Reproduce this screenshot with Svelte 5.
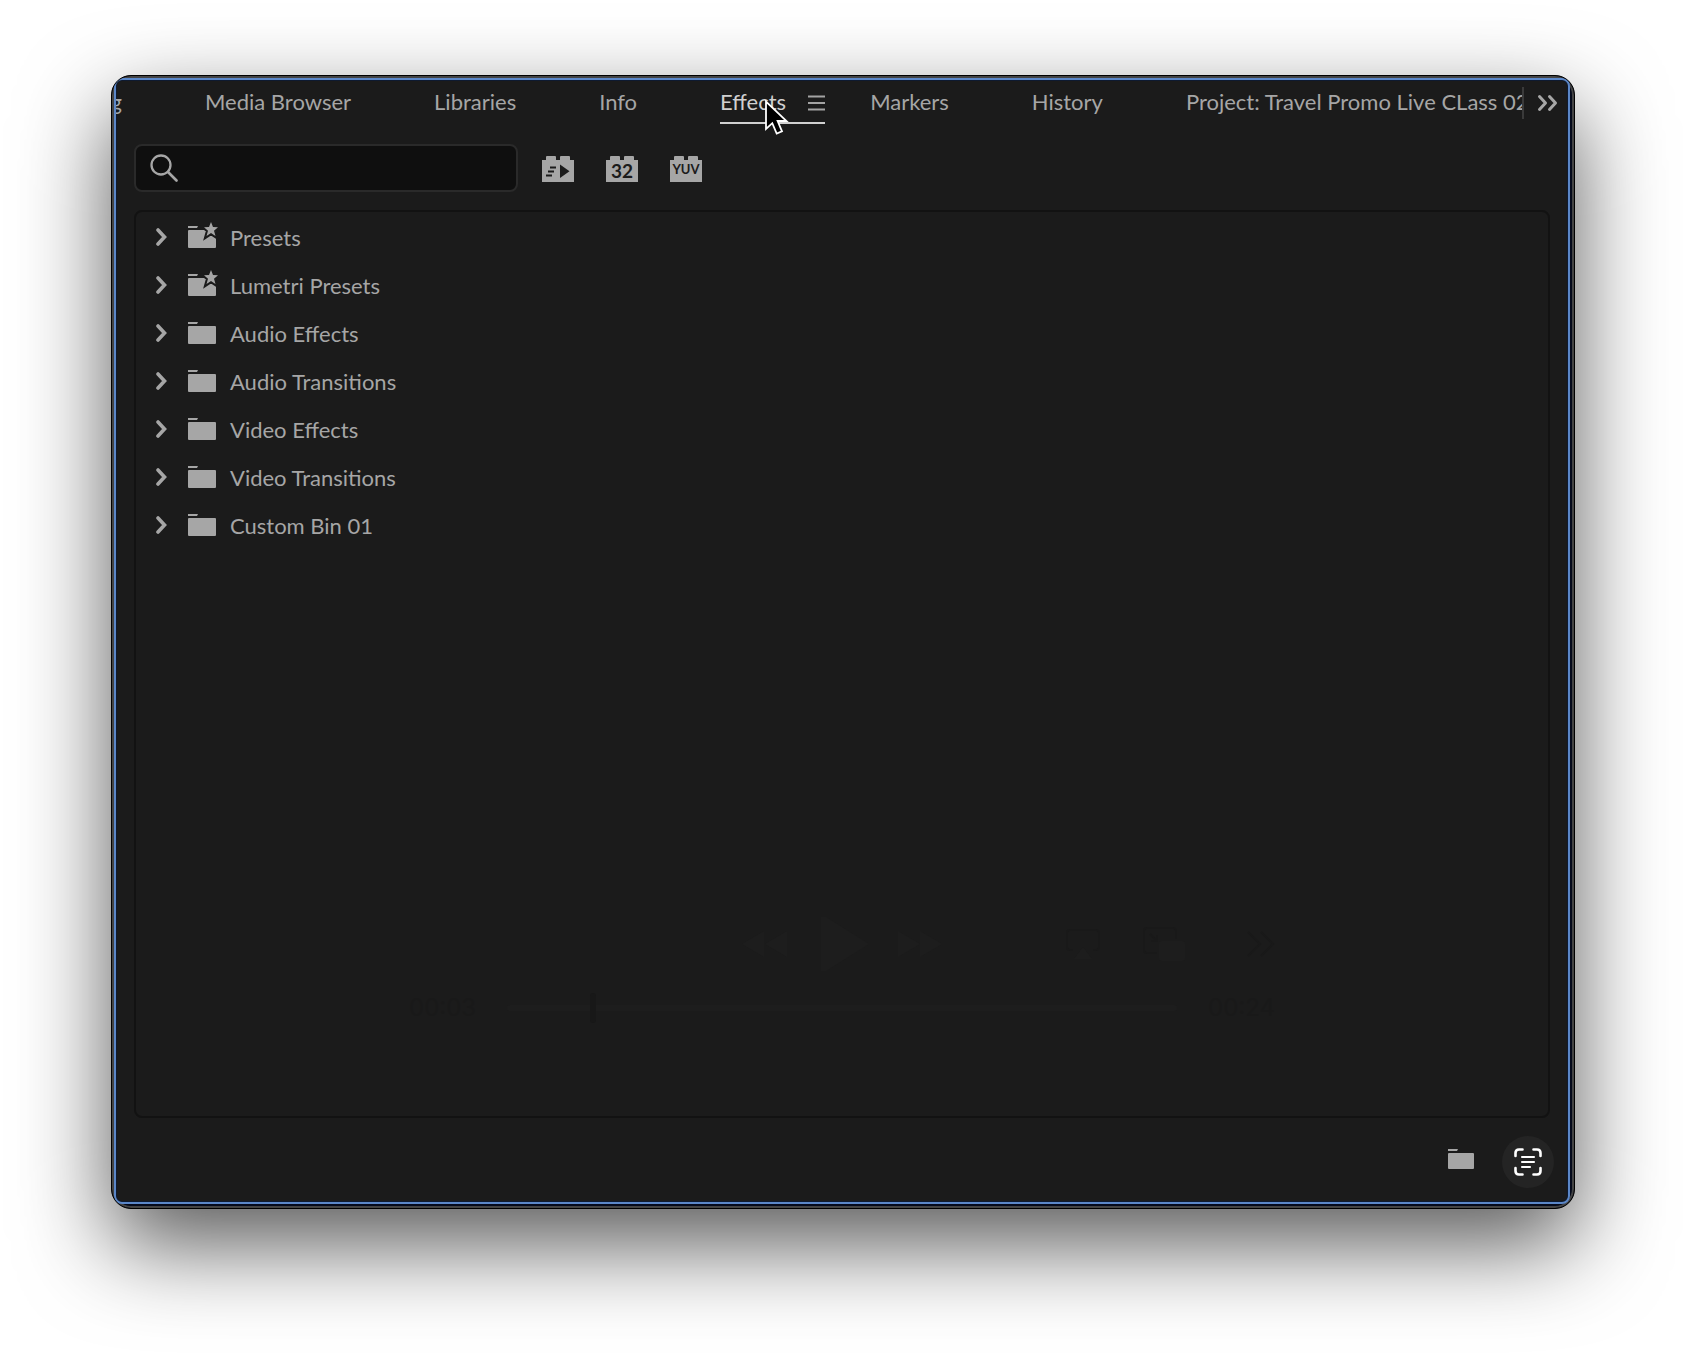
<script lang="ts">
	const bins = [
		{ name: 'Presets', preset: true },
		{ name: 'Lumetri Presets', preset: true },
		{ name: 'Audio Effects', preset: false },
		{ name: 'Audio Transitions', preset: false },
		{ name: 'Video Effects', preset: false },
		{ name: 'Video Transitions', preset: false },
		{ name: 'Custom Bin 01', preset: false }
	];

	const tabsBefore = ['Media Browser', 'Libraries', 'Info'];
	const tabsAfter = ['Markers', 'History', 'Project: Travel Promo Live CLass 02'];

	let query = $state('');
	let position = $state(3);
</script>

<main class="stage">
	<div class="window">
		<section class="panel">
			<header class="tabbar">
				<nav class="tabs">
					<button class="tab cut">g</button>
					{#each tabsBefore as tab}
						<button class="tab">{tab}</button>
					{/each}
					<div class="active">
						<button class="tab current">Effects</button>
						<button class="menu" aria-label="Panel menu">
							<svg width="17" height="16" viewBox="0 0 17 16">
								<path d="M0 1.5h17M0 8h17M0 14.5h17" stroke="#a3a3a3" stroke-width="1.8" />
							</svg>
						</button>
						<svg class="cursor" width="26" height="38" viewBox="0 0 26 38">
							<path
								d="M2 2.500V30L8.300 24.200L12.700 34.500L18 32.300L13.600 22H22.500Z"
								fill="#000"
								stroke="#fff"
								stroke-width="1.8"
							/>
						</svg>
					</div>
					{#each tabsAfter as tab}
						<button class="tab">{tab}</button>
					{/each}
				</nav>
				<button class="overflow" aria-label="More panels">
					<svg width="22" height="18" viewBox="0 0 22 18">
						<path
							d="M2.500 2.500L8.500 9L2.500 15.500M12.500 2.500L18.500 9L12.500 15.500"
							fill="none"
							stroke="#a6a6a6"
							stroke-width="3"
							stroke-linecap="round"
							stroke-linejoin="round"
						/>
					</svg>
				</button>
			</header>

			<div class="toolbar">
				<label class="search">
					<svg width="28" height="28" viewBox="0 0 28 28">
						<circle cx="11" cy="11" r="9.500" fill="none" stroke="#a6a6a6" stroke-width="2.300" />
						<path d="M18 18L26.500 26.500" stroke="#a6a6a6" stroke-width="2.600" stroke-linecap="round" />
					</svg>
					<input type="text" bind:value={query} aria-label="Search effects" />
				</label>
				<button class="brick" aria-label="Accelerated effects">
					<svg width="32" height="26" viewBox="0 0 32 26">
						<path d="M0 4H4V1Q4 0 5 0H13Q14 0 14 1V4H18V1Q18 0 19 0H27Q28 0 28 1V4H32V26H0Z" fill="#a6a6a6" />
						<path d="M18 8.500V22L27.500 15.200Z" fill="#1b1b1b" />
						<path d="M8 11.500H14M6 15.500H12M4 19.500H10" stroke="#1b1b1b" stroke-width="1.800" />
					</svg>
				</button>
				<button class="brick" aria-label="32-bit color effects">
					<svg width="32" height="26" viewBox="0 0 32 26">
						<path d="M0 4H4V1Q4 0 5 0H13Q14 0 14 1V4H18V1Q18 0 19 0H27Q28 0 28 1V4H32V26H0Z" fill="#a6a6a6" />
						<text class="bits" x="16" y="22" text-anchor="middle">32</text>
					</svg>
				</button>
				<button class="brick" aria-label="YUV effects">
					<svg width="32" height="26" viewBox="0 0 32 26">
						<path d="M0 4H4V1Q4 0 5 0H13Q14 0 14 1V4H18V1Q18 0 19 0H27Q28 0 28 1V4H32V26H0Z" fill="#a6a6a6" />
						<text class="yuv" x="16" y="18" text-anchor="middle">YUV</text>
					</svg>
				</button>
			</div>

			<div class="list">
				<ul>
					{#each bins as bin}
						<li>
							<button class="row">
								<svg width="11" height="18" viewBox="0 0 11 18">
									<path
										d="M2 2L8.500 9L2 16"
										fill="none"
										stroke="#a6a6a6"
										stroke-width="3.600"
										stroke-linecap="round"
									/>
								</svg>
								<svg width="31" height="26" viewBox="0 0 31 26">
									<path d="M0 4H10L9 6H0Z" fill="#a6a6a6" />
									<rect y="8" width="28" height="18" rx="1" fill="#a6a6a6" />
									{#if bin.preset}
										<path
											d="M23 0L25 5L30 5.200L26 8.700L27.500 14L23 11L18.500 14L20 8.700L16 5.200L21 5Z"
											fill="#a6a6a6"
											stroke="#1b1b1b"
											stroke-width="4"
											paint-order="stroke"
										/>
									{/if}
								</svg>
								<span>{bin.name}</span>
							</button>
						</li>
					{/each}
				</ul>

				<!-- transport fading out over the panel -->
				<div class="player">
					<div class="transport">
						<div class="shuttle">
							<button aria-label="Rewind">
								<svg width="45" height="26" viewBox="0 0 45 26"><path d="M22 0V26L0 13ZM45 0V26L23 13Z" /></svg>
							</button>
							<button class="play" aria-label="Play">
								<svg width="48" height="54" viewBox="0 0 48 54"><path d="M0 0H5L48 27L5 54H0Z" /></svg>
							</button>
							<button aria-label="Fast forward">
								<svg width="45" height="26" viewBox="0 0 45 26"><path d="M0 0V26L22 13ZM22 0V26L44 13Z" /></svg>
							</button>
						</div>
						<div class="extras">
							<button aria-label="AirPlay">
								<svg width="34" height="30" viewBox="0 0 34 30">
									<path class="line" d="M7 21H4Q1 21 1 18V4Q1 1 4 1H30Q33 1 33 4V18Q33 21 30 21H27" />
									<path d="M17 18L26 30H8Z" />
								</svg>
							</button>
							<button aria-label="Picture in picture">
								<svg width="42" height="34" viewBox="0 0 42 34">
									<path class="line" d="M14 26H4Q1 26 1 23V4Q1 1 4 1H30Q33 1 33 4V12M7 7L14 14M14 8V14H8" />
									<rect x="16" y="14" width="26" height="20" rx="3" />
								</svg>
							</button>
							<button class="last" aria-label="More">
								<svg width="29" height="26" viewBox="0 0 29 26">
									<path class="line" d="M2 1L14 13L2 25M15 1L27 13L15 25" />
								</svg>
							</button>
						</div>
					</div>
					<div class="timeline">
						<span>00:03</span>
						<input type="range" min="0" max="24" bind:value={position} aria-label="Position" />
						<span>00:24</span>
					</div>
				</div>
			</div>

			<footer>
				<button class="newbin" aria-label="New custom bin">
					<svg width="26" height="20" viewBox="0 0 26 20">
						<path d="M0 0H10L9 2H0Z" fill="#a6a6a6" />
						<rect y="4" width="26" height="16" rx="1" fill="#a6a6a6" />
					</svg>
				</button>
				<button class="scan" aria-label="Live text">
					<svg width="28" height="28" viewBox="0 0 28 28" fill="none" stroke="#fff" stroke-linecap="round">
						<path
							d="M1.500 8V5Q1.500 1.500 5 1.500H8.500M19.500 1.500H23Q26.500 1.500 26.500 5V8M26.500 20V23Q26.500 26.500 23 26.500H19.500M8.500 26.500H5Q1.500 26.500 1.500 23V20"
							stroke-width="2.600"
						/>
						<path d="M8 9H20M8 14H20M8 19H16" stroke-width="2.100" />
					</svg>
				</button>
			</footer>
		</section>
	</div>
</main>

<style>
	:global(body) {
		background: #fff;
	}

	.stage {
		display: flex;
		box-sizing: border-box;
		min-height: 100vh;
		padding: 75px 111px 147px;
		overflow: hidden;
		font-family: Lato, 'Noto Sans', sans-serif;
		font-size: 22px;
		color: #a6a6a6;
	}

	button,
	input {
		margin: 0;
		padding: 0;
		border: none;
		background: none;
		color: inherit;
		font: inherit;
	}

	svg {
		display: block;
		flex: none;
	}

	.window {
		display: flex;
		flex: 1;
		min-width: 0;
		padding: 2px 4px 4px 2px;
		border: 1px solid #000;
		border-radius: 20px;
		background: #050a1c;
		box-shadow:
			inset 0 0 0 2px #444,
			0 36px 90px rgba(0, 0, 0, 0.65);
		overflow: hidden;
	}

	.panel {
		display: flex;
		flex: 1;
		flex-direction: column;
		min-width: 0;
		border: 2px solid #5b87c8;
		border-radius: 8px;
		background: #1b1b1b;
		box-shadow: inset 0 0 0 1px #0e1a30;
		overflow: hidden;
	}

	.tabbar {
		display: flex;
		align-items: center;
		height: 46px;
	}

	.tabs {
		display: flex;
		flex: 1;
		gap: 83px;
		align-items: center;
		height: 46px;
		min-width: 0;
		overflow-x: clip;
	}

	.tab {
		flex: none;
		line-height: 44px;
		padding-bottom: 2px;
		white-space: nowrap;
	}

	.cut {
		display: flex;
		justify-content: flex-end;
		width: 6px;
	}

	.active {
		position: relative;
		display: flex;
		flex: none;
		gap: 22px;
		align-items: center;
		height: 46px;
		margin-right: -38px;
	}

	.active::after {
		content: '';
		position: absolute;
		right: 0;
		bottom: 2px;
		left: 0;
		height: 2px;
		background: #d0d0d0;
	}

	.current {
		color: #d0d0d0;
	}

	.cursor {
		position: absolute;
		top: 19px;
		left: 44px;
		z-index: 1;
	}

	.overflow {
		display: flex;
		align-items: center;
		height: 32px;
		padding: 0 9px 0 13px;
		border-left: 2px solid #3a3a3a;
	}

	.toolbar {
		display: flex;
		gap: 32px;
		align-items: center;
		margin: 18px 18px 0;
	}

	.search {
		display: flex;
		gap: 12px;
		align-items: center;
		box-sizing: border-box;
		width: 384px;
		height: 48px;
		margin-right: -8px;
		padding: 0 14px;
		border: 2px solid #2a2a2a;
		border-radius: 8px;
		background: #0f0f0f;
	}

	.search input {
		flex: 1;
		min-width: 0;
		outline: none;
	}

	.brick {
		padding-top: 2px;
	}

	.brick text {
		fill: #1b1b1b;
		font-weight: 700;
	}

	.bits {
		font-size: 19px;
	}

	.yuv {
		font-size: 13px;
	}

	.list {
		display: flex;
		flex: 1;
		flex-direction: column;
		margin: 18px 18px 0;
		border: 2px solid #121212;
		border-radius: 8px;
	}

	ul {
		margin: 0;
		padding: 1px 0 0;
		list-style: none;
	}

	.row {
		display: flex;
		align-items: center;
		width: 100%;
		height: 48px;
		padding-left: 20px;
	}

	.row svg + svg {
		margin: 0 11px 4px 21px;
	}

	.player {
		width: 866px;
		max-width: 100%;
		margin: auto auto 92px;
		color: #191919;
	}

	.player svg {
		fill: #1d1d1d;
	}

	.player .line {
		fill: none;
		stroke: #191919;
		stroke-width: 2;
	}

	.transport {
		display: grid;
		grid-template-columns: 1fr auto 1fr;
		align-items: center;
	}

	.shuttle {
		display: flex;
		grid-column: 2;
		gap: 29px;
		align-items: center;
	}

	.play {
		margin-left: 5px;
	}

	.extras {
		display: flex;
		gap: 43px;
		align-items: center;
		justify-content: flex-end;
	}

	.last {
		margin-left: 18px;
	}

	.timeline {
		display: flex;
		gap: 31px;
		align-items: center;
		margin-top: 21px;
		font-family: Inter, sans-serif;
		font-size: 24px;
		line-height: 32px;
	}

	.timeline input {
		flex: 1;
		height: 32px;
		appearance: none;
	}

	.timeline input::-webkit-slider-runnable-track {
		height: 6px;
		border-radius: 3px;
		background: #1d1d1d;
	}

	.timeline input::-webkit-slider-thumb {
		width: 6px;
		height: 30px;
		margin-top: -12px;
		border-radius: 3px;
		background: #181818;
		appearance: none;
	}

	footer {
		display: flex;
		gap: 28px;
		align-items: center;
		justify-content: flex-end;
		padding: 18px 14px 14px;
	}

	.newbin {
		padding-bottom: 6px;
	}

	.scan {
		display: grid;
		place-items: center;
		width: 52px;
		height: 52px;
		border-radius: 50%;
		background: #242424;
	}
</style>
